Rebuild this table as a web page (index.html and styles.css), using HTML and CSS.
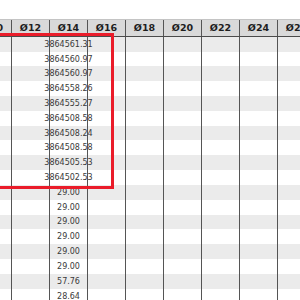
FILE: index.html
```html
<!DOCTYPE html>
<html>
<head>
<meta charset="utf-8">
<link rel="stylesheet" href="styles.css">
</head>
<body>
<div class="sheet">
  <div class="row head">
    <div class="cell">Ø10</div><div class="cell">Ø12</div><div class="cell">Ø14</div><div class="cell">Ø16</div><div class="cell">Ø18</div><div class="cell">Ø20</div><div class="cell">Ø22</div><div class="cell">Ø24</div><div class="cell">Ø26</div>
  </div>
  <div class="row"><div class="cell"></div><div class="cell"></div><div class="cell">3864561.31</div><div class="cell"></div><div class="cell"></div><div class="cell"></div><div class="cell"></div><div class="cell"></div><div class="cell"></div></div>
  <div class="row"><div class="cell"></div><div class="cell"></div><div class="cell">3864560.97</div><div class="cell"></div><div class="cell"></div><div class="cell"></div><div class="cell"></div><div class="cell"></div><div class="cell"></div></div>
  <div class="row"><div class="cell"></div><div class="cell"></div><div class="cell">3864560.97</div><div class="cell"></div><div class="cell"></div><div class="cell"></div><div class="cell"></div><div class="cell"></div><div class="cell"></div></div>
  <div class="row"><div class="cell"></div><div class="cell"></div><div class="cell">3864558.26</div><div class="cell"></div><div class="cell"></div><div class="cell"></div><div class="cell"></div><div class="cell"></div><div class="cell"></div></div>
  <div class="row"><div class="cell"></div><div class="cell"></div><div class="cell">3864555.27</div><div class="cell"></div><div class="cell"></div><div class="cell"></div><div class="cell"></div><div class="cell"></div><div class="cell"></div></div>
  <div class="row"><div class="cell"></div><div class="cell"></div><div class="cell">3864508.58</div><div class="cell"></div><div class="cell"></div><div class="cell"></div><div class="cell"></div><div class="cell"></div><div class="cell"></div></div>
  <div class="row"><div class="cell"></div><div class="cell"></div><div class="cell">3864508.24</div><div class="cell"></div><div class="cell"></div><div class="cell"></div><div class="cell"></div><div class="cell"></div><div class="cell"></div></div>
  <div class="row"><div class="cell"></div><div class="cell"></div><div class="cell">3864508.58</div><div class="cell"></div><div class="cell"></div><div class="cell"></div><div class="cell"></div><div class="cell"></div><div class="cell"></div></div>
  <div class="row"><div class="cell"></div><div class="cell"></div><div class="cell">3864505.53</div><div class="cell"></div><div class="cell"></div><div class="cell"></div><div class="cell"></div><div class="cell"></div><div class="cell"></div></div>
  <div class="row"><div class="cell"></div><div class="cell"></div><div class="cell">3864502.53</div><div class="cell"></div><div class="cell"></div><div class="cell"></div><div class="cell"></div><div class="cell"></div><div class="cell"></div></div>
  <div class="row"><div class="cell"></div><div class="cell"></div><div class="cell">29.00</div><div class="cell"></div><div class="cell"></div><div class="cell"></div><div class="cell"></div><div class="cell"></div><div class="cell"></div></div>
  <div class="row"><div class="cell"></div><div class="cell"></div><div class="cell">29.00</div><div class="cell"></div><div class="cell"></div><div class="cell"></div><div class="cell"></div><div class="cell"></div><div class="cell"></div></div>
  <div class="row"><div class="cell"></div><div class="cell"></div><div class="cell">29.00</div><div class="cell"></div><div class="cell"></div><div class="cell"></div><div class="cell"></div><div class="cell"></div><div class="cell"></div></div>
  <div class="row"><div class="cell"></div><div class="cell"></div><div class="cell">29.00</div><div class="cell"></div><div class="cell"></div><div class="cell"></div><div class="cell"></div><div class="cell"></div><div class="cell"></div></div>
  <div class="row"><div class="cell"></div><div class="cell"></div><div class="cell">29.00</div><div class="cell"></div><div class="cell"></div><div class="cell"></div><div class="cell"></div><div class="cell"></div><div class="cell"></div></div>
  <div class="row"><div class="cell"></div><div class="cell"></div><div class="cell">29.00</div><div class="cell"></div><div class="cell"></div><div class="cell"></div><div class="cell"></div><div class="cell"></div><div class="cell"></div></div>
  <div class="row"><div class="cell"></div><div class="cell"></div><div class="cell">57.76</div><div class="cell"></div><div class="cell"></div><div class="cell"></div><div class="cell"></div><div class="cell"></div><div class="cell"></div></div>
  <div class="row"><div class="cell"></div><div class="cell"></div><div class="cell">28.64</div><div class="cell"></div><div class="cell"></div><div class="cell"></div><div class="cell"></div><div class="cell"></div><div class="cell"></div></div>
  <div class="row"><div class="cell"></div><div class="cell"></div><div class="cell">28.64</div><div class="cell"></div><div class="cell"></div><div class="cell"></div><div class="cell"></div><div class="cell"></div><div class="cell"></div></div>
</div>
<div class="highlight"></div>
</body>
</html>
```
FILE: styles.css
```css
html, body {
  margin: 0;
  padding: 0;
  background: #fff;
  overflow: hidden;
}
body {
  position: relative;
  width: 300px;
  height: 300px;
  font-family: "DejaVu Sans", Verdana, sans-serif;
}
.sheet {
  padding-top: 19px;
  margin-left: -27px;
  width: 342px;
}
.row {
  display: grid;
  grid-template-columns: repeat(9, 38px);
  height: 14.82px;
  font-size: 8px;
  color: #3a3a3a;
}
.row:nth-child(even) {
  background: #ebebeb;
}
.row.head {
  box-sizing: border-box;
  height: 17.8px;
  background: #d9d9d9;
  border-top: 1px solid #c4c4c4;
  border-bottom: 1px solid #4a4a4a;
  font-size: 9.5px;
  font-weight: bold;
  color: #1e1e1e;
}
.cell {
  border-left: 1px solid #555;
  display: flex;
  align-items: center;
  justify-content: center;
  white-space: nowrap;
  min-width: 0;
}
.highlight {
  position: absolute;
  left: -10px;
  top: 33px;
  width: 124px;
  height: 156px;
  box-sizing: border-box;
  border: 3px solid #ea1c2a;
}
```
